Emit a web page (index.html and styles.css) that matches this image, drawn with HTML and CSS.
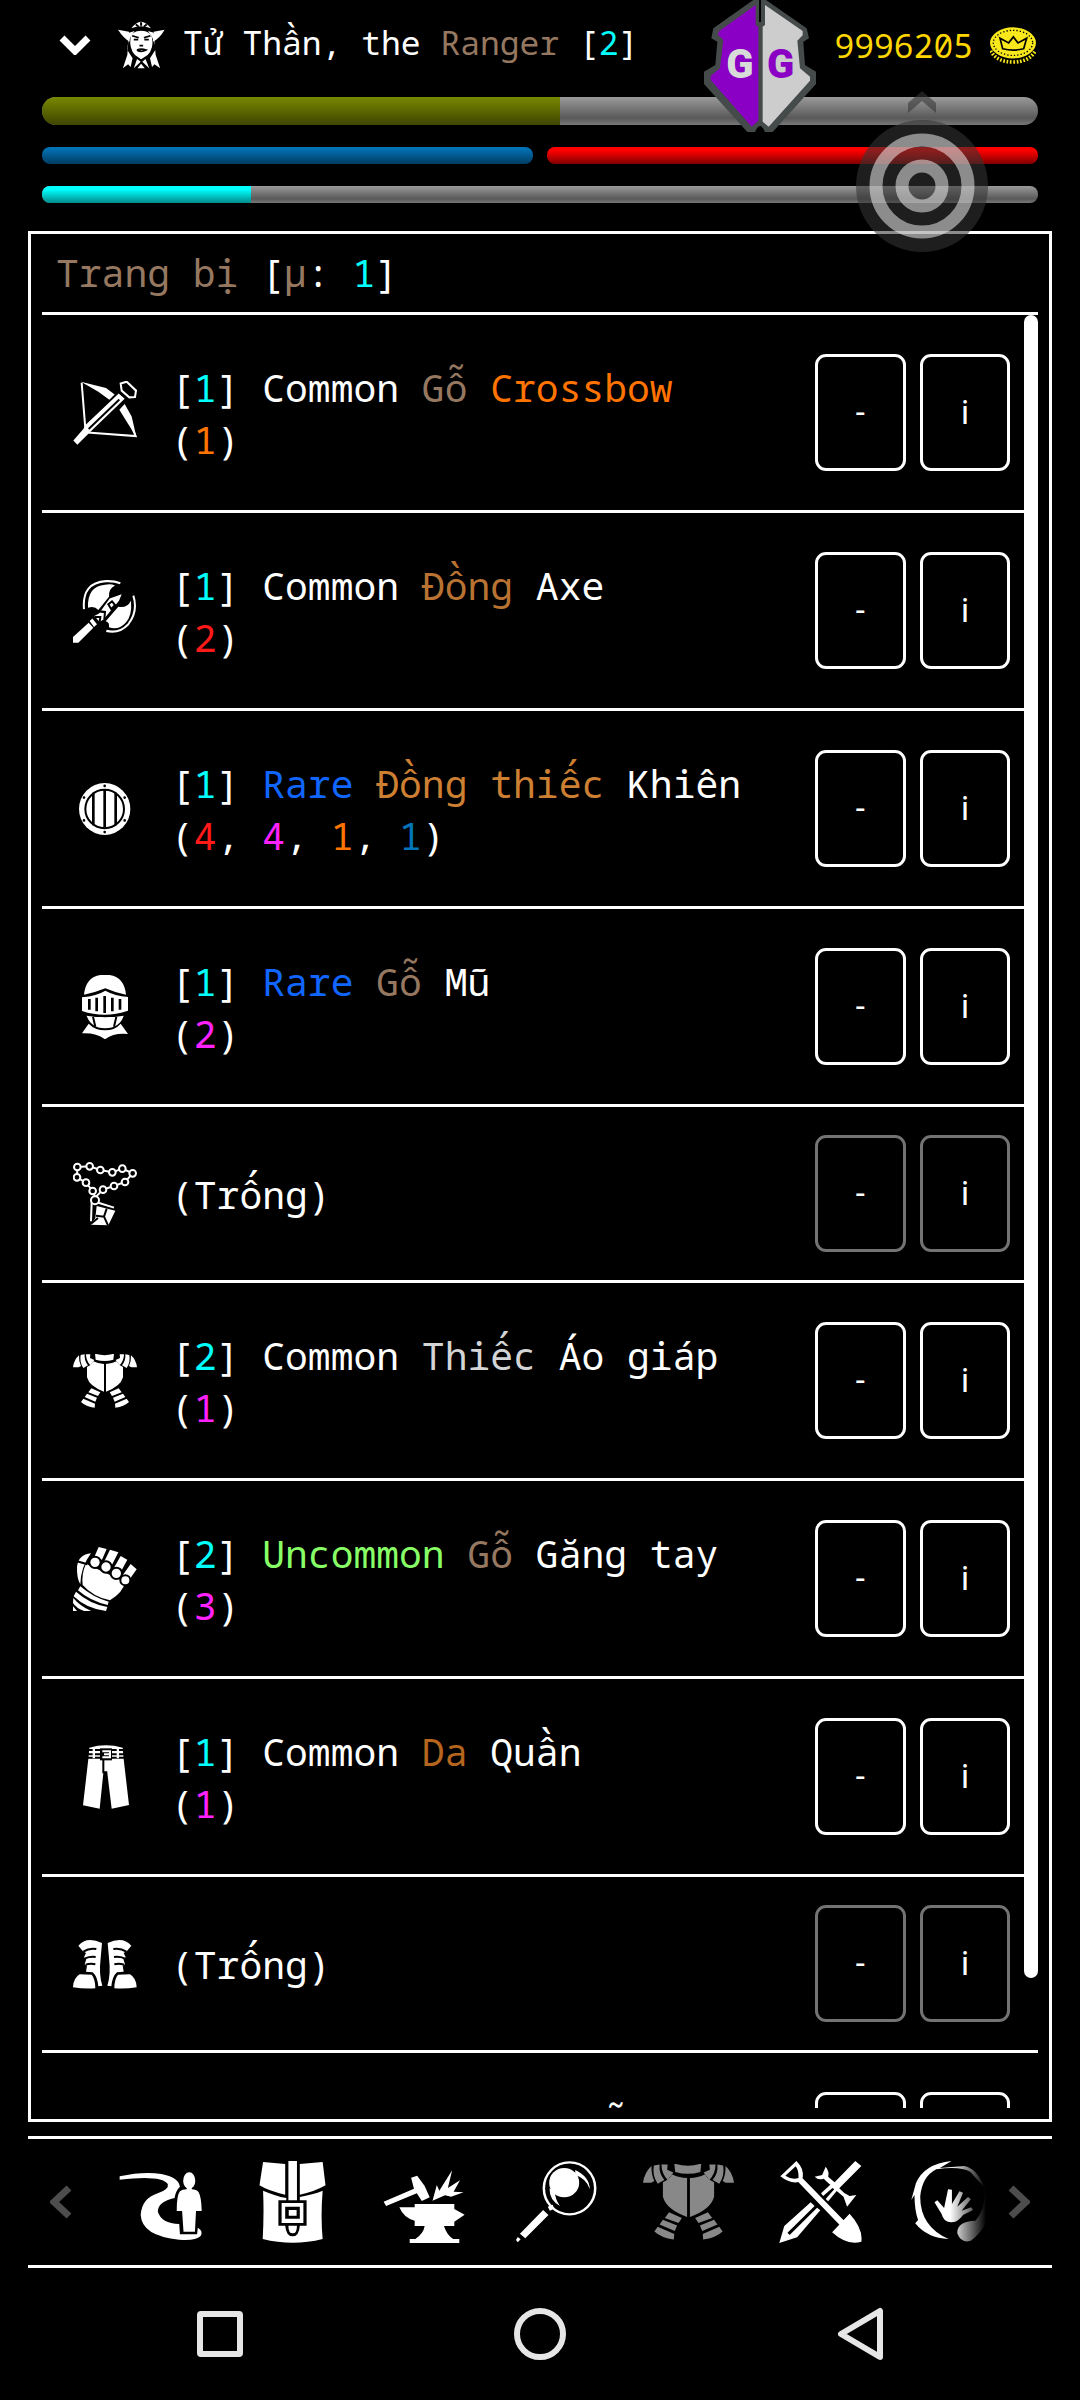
FILE: index.html
```html
<!DOCTYPE html>
<html lang="vi">
<head>
  <meta charset="utf-8">
  <title>Trang bị</title>
  <link rel="stylesheet" href="styles.css">
</head>
<body>
  <!-- shared by the list and the toolbar -->
  <svg class="defs" aria-hidden="true">
    <defs>
      <g id="armour-half">
        <path d="M129 268 Q132 245 147 232 Q146 250 153 264 L146 268Z M152 231 L164 229 Q162 247 174 262 L160 270 Q148 252 152 231Z M168 229 H181 L180 240 L193 246 L181 262 Q168 248 168 229Z"/>
        <path d="M190 250 Q206 258 222 258 V341 Q178 325 171 298 V267 Q184 262 190 250Z"/>
        <path d="M184 331 L211 343 L204 354 L175 343Z M171 347 L201 359 L196 371 L164 357Z M160 362 L195 377 L194 389 Q168 386 153 372Z"/>
      </g>
      <symbol id="armour" viewBox="129 228 192 162" preserveAspectRatio="none">
        <path d="M195 227 Q224 236 252 227 L250 245 Q224 253 197 245Z"/>
        <use href="#armour-half"/>
        <use href="#armour-half" transform="translate(450 0) scale(-1 1)"/>
      </symbol>
      <g id="boot">
        <path d="M145 858 Q170 828 216 850 L212 895 Q206 945 217 978 L205 980 Q202 950 188 938 L168 936 L171 918 L164 914 L169 898 L162 893 L168 880 L158 874Z"/>
        <path d="M149 944 L185 945 Q196 958 196 986 Q160 988 129 983 Q130 955 149 944Z"/>
        <path class="cut" d="M160 876 Q178 864 199 868 M165 896 Q180 890 197 892 M167 915 Q182 910 196 914"/>
      </g>
    </defs>
  </svg>

  <header class="top">
    <button class="hero">
      <svg class="chevron" viewBox="0 0 32 20"><path class="line" d="M3 3 L16 16 L29 3"/></svg>
      <svg class="portrait" viewBox="289 68 116 144" preserveAspectRatio="none">
        <path d="M289 94 L316 100 L318 130 Q303 120 289 94Z M404 94 L377 100 L375 130 Q392 120 404 94Z"/>
        <path d="M322 90 Q346 50 370 90 Q346 78 322 90Z M316 103 L330 98 Q312 125 312 155 L325 180 L320 206 L314 198 L301 210 L312 170Z M377 103 L363 98 Q381 125 381 155 L368 180 L373 206 L379 198 L393 210 L382 170Z"/>
        <path d="M320 118 Q322 98 346 97 Q370 98 373 118 Q378 150 362 170 L346 183 L331 170 Q316 150 320 118Z M336 182 L345 190 L328 210Z M357 182 L349 190 L366 210Z M346 196 L355 210 H337Z"/>
        <path class="features" d="M324 112 L340 118 M369 112 L353 118 M328 124 H339 M365 124 H354 M336 155 Q346 150 358 155 Q346 163 336 155 M342 142 H351 M346 72 V82 M333 78 L340 85 M360 78 L353 85"/>
      </svg>
      <span class="name">Tử Thần, the <span class="wood">Ranger</span> [<span class="cyan">2</span>]</span>
    </button>
    <div class="gold">
      <span>9996205</span>
      <svg class="coin" viewBox="1050 86 138 112" preserveAspectRatio="none">
        <ellipse cx="1119" cy="134" rx="69" ry="47"/>
        <path class="edge" d="M1052 158 Q1070 192 1119 192 Q1168 192 1186 158"/>
        <ellipse class="dots" cx="1119" cy="134" rx="59" ry="38"/>
        <path class="crown" d="M1088 152 L1080 120 L1106 134 L1120 116 L1134 134 L1160 120 L1151 152 Q1120 160 1088 152Z"/>
      </svg>
    </div>
  </header>

  <section class="bars">
    <div class="bar tall"><div class="fill olive" style="width:52%"></div></div>
    <div class="pair">
      <div class="bar"><div class="fill blue-fill" style="width:100%"></div></div>
      <div class="bar"><div class="fill red-fill" style="width:100%"></div></div>
    </div>
    <div class="bar"><div class="fill cyan-fill" style="width:21%"></div></div>
  </section>

  <main class="panel">
    <h1><span class="wood">Trang bị</span> [<span class="wood">μ</span>: <span class="cyan">1</span>]</h1>
    <div class="scroll">
      <ul>
        <li>
          <svg class="icon" viewBox="129 168 192 180" preserveAspectRatio="none">
            <path class="thin" d="M155 173 L166 302 M172 313 L317 323 L300 285 M272 175 L290 170 L318 195 L315 213 L298 214 L275 195Z"/>
            <path d="M153 170 L195 180 L228 188 L254 206 L238 221 L205 198Z M268 249 L284 233 L305 268 L319 325 L294 288Z M130 335 L160 303 L168 290 L266 203 L284 218 L182 310 L142 347Z"/>
            <path class="cut" d="M176 303 L268 220"/>
          </svg>
          <p>[<span class="cyan">1</span>] Common <span class="wood">Gỗ</span> <span class="orange">Crossbow</span><br>(<span class="orange">1</span>)</p>
          <button>-</button><button>i</button>
        </li>
        <li>
          <svg class="icon" viewBox="126 725 192 180" preserveAspectRatio="none">
            <path class="thin" d="M159 810 Q152 735 225 731 Q250 730 268 737 M307 772 Q322 815 292 852 Q264 880 226 871"/>
            <path d="M171 806 Q168 745 222 741 Q240 738 252 743 Q232 752 234 775 L202 812 Q190 800 171 806Z M300 786 Q304 828 284 848 Q262 870 234 861 Q236 846 224 844 L262 803 Q288 808 300 786Z"/>
            <path d="M126 888 L173 848 L187 862 L142 904 H126Z M176 843 L184 836 L198 852 L189 860Z M190 829 L204 822 L236 780 L272 768 L264 786 L218 838 L206 846Z"/>
            <path class="cut" d="M192 832 L208 832 L206 846 M204 816 L222 818 L220 838 M232 796 L243 788 L252 798 L241 810Z"/>
          </svg>
          <p>[<span class="cyan">1</span>] Common <span class="copper">Đồng</span> Axe<br>(<span class="red">2</span>)</p>
          <button>-</button><button>i</button>
        </li>
        <li>
          <svg class="icon" viewBox="129 1278 192 180" preserveAspectRatio="none">
            <ellipse cx="224" cy="1368" rx="77" ry="73"/>
            <ellipse class="cut" cx="224" cy="1368" rx="58" ry="54"/>
            <path class="slots" d="M190 1322 V1414 M224 1314 V1420 M257 1322 V1414"/>
            <path class="rivets" d="M224 1303v0 M224 1433v0 M162 1336v0 M284 1336v0 M162 1400v0 M284 1400v0"/>
          </svg>
          <p>[<span class="cyan">1</span>] <span class="rare">Rare</span> <span class="bronze">Đồng thiếc</span> Khiên<br>(<span class="red">4</span>, <span class="pink">4</span>, <span class="orange">1</span>, <span class="blue">1</span>)</p>
          <button>-</button><button>i</button>
        </li>
        <li>
          <svg class="icon" viewBox="129 225 192 192">
            <path d="M162 284 Q168 224 225 224 Q282 224 288 284 Q255 278 226 265 Q195 278 162 284Z M156 292 Q200 288 226 272 Q255 288 294 291 V332 Q225 356 156 333Z M170 347 Q225 356 281 347 Q270 384 225 385 Q182 384 170 347Z M176 371 Q195 391 225 391 Q255 391 272 371 L294 402 Q250 398 225 418 Q200 398 156 400Z"/>
            <path class="slots" d="M178 297 V329 M200 293 V334 M224 288 V339 M247 293 V334 M270 297 V329"/>
            <path class="cut" d="M189 350 L196 380 M259 350 L252 380"/>
          </svg>
          <p>[<span class="cyan">1</span>] <span class="rare">Rare</span> <span class="wood">Gỗ</span> Mũ<br>(<span class="pink">2</span>)</p>
          <button>-</button><button>i</button>
        </li>
        <li class="empty">
          <svg class="icon" viewBox="129 784 192 192">
            <path class="thin" d="M142 799 L179 797 L211 808 L247 815 L277 804 L308 818 L285 844 L252 856 L219 867 L196 890 L188 871 L168 846 L141 830Z M185 905 L183 962 M198 904 L252 921"/>
            <g class="beads">
              <circle cx="142" cy="799" r="10"/><circle cx="179" cy="797" r="10"/><circle cx="211" cy="808" r="10"/><circle cx="247" cy="815" r="10"/>
              <circle cx="277" cy="804" r="10"/><circle cx="308" cy="818" r="10"/><circle cx="285" cy="844" r="10"/><circle cx="252" cy="856" r="10"/>
              <circle cx="219" cy="867" r="10"/><circle cx="188" cy="871" r="10"/><circle cx="168" cy="846" r="10"/><circle cx="141" cy="830" r="10"/>
              <circle cx="195" cy="899" r="12"/>
            </g>
            <path d="M200 916 L256 930 L235 974 L182 972 L196 952Z"/>
            <path class="cut" d="M198 945 L222 948 L230 924 M222 948 L234 974 M204 952 L182 970"/>
          </svg>
          <p>(Trống)</p>
          <button disabled>-</button><button disabled>i</button>
        </li>
        <li>
          <svg class="icon wide"><use href="#armour"/></svg>
          <p>[<span class="cyan">2</span>] Common <span class="tin">Thiếc</span> Áo giáp<br>(<span class="pink">1</span>)</p>
          <button>-</button><button>i</button>
        </li>
        <li>
          <svg class="icon" viewBox="129 800 192 192">
            <path d="M183 819 Q145 822 141 860 Q140 895 151 912 Q152 860 183 819Z M168 850 L285 905 Q280 935 240 960 Q190 950 158 914 Q154 880 168 850Z"/>
            <path d="M206 800 L230 806 L216 838 L192 832Z M240 808 L265 816 L247 852 L222 845Z M272 827 L292 838 L275 870 L252 862Z M302 851 L320 867 L300 895 L278 885Z"/>
            <g class="knuckles"><circle cx="195" cy="846" r="17"/><circle cx="228" cy="860" r="17"/><circle cx="259" cy="879" r="17"/><circle cx="286" cy="900" r="15"/></g>
            <path d="M151 918 Q190 952 236 964 L233 974 Q180 962 144 930Z M138 934 Q178 970 232 980 L228 992 Q170 986 131 948Z M130 953 Q150 978 186 993 H165 Q140 985 129 968Z M129 978 L142 993 H129Z"/>
            <path class="cut" d="M141 843 L172 852"/>
          </svg>
          <p>[<span class="cyan">2</span>] <span class="uncommon">Uncommon</span> <span class="wood">Gỗ</span> Găng tay<br>(<span class="pink">3</span>)</p>
          <button>-</button><button>i</button>
        </li>
        <li>
          <svg class="icon" viewBox="129 254 192 192">
            <path d="M178 262 Q228 248 278 262 L281 296 L297 434 L245 445 L232 338 H220 L209 445 L159 435 L175 296Z"/>
            <path class="cut" d="M174 269 H282 M174 282 H212 M244 282 H282 M174 292 H212 M244 292 H282 M220 296 V336 H232"/>
            <rect x="210" y="264" width="36" height="36" class="hole"/>
            <path class="thin" d="M217 273 H240 V291 H217 M222 282 H238"/>
            <path d="M188 266h7v28h-7z M260 266h7v28h-7z"/>
          </svg>
          <p>[<span class="cyan">1</span>] Common <span class="leather">Da</span> Quần<br>(<span class="pink">1</span>)</p>
          <button>-</button><button>i</button>
        </li>
        <li class="empty">
          <svg class="icon" viewBox="129 817 192 192">
            <use href="#boot"/>
            <use href="#boot" transform="translate(449 0) scale(-1 1)"/>
          </svg>
          <p>(Trống)</p>
          <button disabled>-</button><button disabled>i</button>
        </li>
        <li>
          <svg class="icon" viewBox="0 0 64 64"><circle class="ring" cx="32" cy="38" r="20"/><path d="M20 4 H44 L32 18Z"/></svg>
          <p>[<span class="cyan">1</span>] Common <span class="tin">Titan</span> Nhẫn<br>(<span class="pink">1</span>)</p>
          <button>-</button><button>i</button>
        </li>
      </ul>
      <div class="thumb"></div>
    </div>
  </main>

  <nav class="tools">
    <button class="arrow" aria-label="Previous"><svg viewBox="0 0 22 34"><path class="line" d="M19 3 L4 17 L19 31"/></svg></button>
    <div class="strip">
      <button aria-label="Road">
        <svg viewBox="320 303 255 246" preserveAspectRatio="none">
          <path d="M333 349 Q400 333 450 342 Q498 352 502 380 Q490 392 487 414 Q440 425 440 455 Q450 490 500 492 L502 523 H550 L552 503 Q568 512 560 528 Q545 543 500 539 Q395 528 392 465 Q395 415 440 400 Q472 388 468 372 Q450 344 333 359Z"/>
          <ellipse cx="528" cy="362" rx="17" ry="25"/>
          <path d="M521 380 H535 V388 Q548 388 554 396 Q562 410 563 453 H547 L544 515 H512 L508 453 H493 Q493 405 502 394 Q508 388 521 388Z"/>
        </svg>
      </button>
      <button aria-label="Backpack">
        <svg viewBox="690 303 255 246" preserveAspectRatio="none">
          <path d="M735 306 L797 312 V404 Q750 393 725 376Z M838 312 L902 306 L910 376 Q880 395 838 404Z M806 303 H830 V421 H806Z"/>
          <path d="M735 392 Q770 408 800 414 V421 H778 V497 H797 Q800 529 818 529 Q836 529 838 497 H857 V421 H838 V411 Q880 402 902 392 Q896 470 902 537 Q818 560 734 537 Q738 460 735 392Z"/>
          <path fill-rule="evenodd" d="M787 429 H848 V489 H787Z M797 440 V476 H838 V440Z M807 450 H829 V467 H807Z M806 497 H830 Q830 520 818 520 Q806 520 806 497Z"/>
        </svg>
      </button>
      <button aria-label="Anvil">
        <svg viewBox="1060 303 255 246" preserveAspectRatio="none">
          <path d="M1073 425 L1158 386 L1150 353 L1167 347 L1188 378 L1202 412 L1180 423 L1166 400 L1080 438Z M1210 422 L1222 375 L1229 392 L1265 331 L1253 384 L1287 361 L1269 395 L1297 397 L1262 410 L1245 406Z"/>
          <path d="M1160 432 H1271 V447 L1300 464 L1271 485 V498 H1242 Q1250 525 1268 537 H1285 V549 H1146 V537 H1162 Q1185 520 1188 498 H1160 V482 Q1130 475 1117 442 H1160Z"/>
        </svg>
      </button>
      <button aria-label="Magnifier">
        <svg viewBox="-25 303 255 246" preserveAspectRatio="none">
          <ellipse class="line" cx="139" cy="385" rx="72" ry="78"/>
          <ellipse cx="124" cy="368" rx="42" ry="44"/>
          <path d="M155 330 Q195 350 196 388 Q186 355 155 345Z M83 385 Q82 420 112 438 Q98 415 98 395Z M78 440 L92 434 L96 446 L84 452Z M65 450 L80 465 L15 535 L0 521Z M-6 531 L2 538 L-6 547 L-11 540Z"/>
        </svg>
      </button>
      <button class="current" aria-label="Equipment"><svg class="wide"><use href="#armour"/></svg></button>
      <button aria-label="Crafting">
        <svg viewBox="713 303 255 246" preserveAspectRatio="none">
          <path fill-rule="evenodd" d="M728 349 L773 303 Q794 325 791 352 L780 366 Q755 372 728 349Z M742 347 L771 319 Q780 332 779 354 Q760 360 742 347Z"/>
          <path d="M776 364 L789 353 L910 486 L897 498Z M873 517 L922 461 Q960 505 955 545 Q915 558 873 517Z"/>
          <path d="M813 427 L824 438 L748 518 L754 525 L831 443 L840 451 L775 532 L725 549 L739 498Z"/>
          <path d="M938 303 L955 318 L893 385 Q905 400 922 408 L941 405 L915 440 L905 410 L886 393 L862 424 L855 417 L879 388 L874 384 L848 408 L842 400 L868 374 Q855 362 850 356 Q835 362 824 350 L845 345 L855 320 Q866 335 862 350 L880 367Z"/>
        </svg>
      </button>
      <button aria-label="Magic">
        <svg viewBox="1083 303 255 246" preserveAspectRatio="none">
          <path d="M1208 303 Q1130 312 1108 370 L1095 420 L1104 405 Q1104 450 1114 480 L1106 490 Q1140 535 1200 537 Q1120 500 1120 410 Q1125 350 1165 328 Q1230 318 1260 335 L1298 380 Q1280 325 1243 318 L1175 324Z"/>
          <path d="M1300 370 Q1308 440 1275 482 Q1222 484 1224 520 Q1235 552 1262 542 Q1340 480 1300 370Z"/>
          <path d="M1160 427 L1168 421 L1187 444 L1198 388 L1209 389 L1209 432 L1230 394 L1240 398 L1224 440 L1254 411 L1262 418 L1236 452 L1263 442 L1268 450 L1240 465 Q1225 488 1205 487 Q1185 485 1180 462Z"/>
        </svg>
      </button>
    </div>
    <button class="arrow" aria-label="Next"><svg viewBox="0 0 22 34"><path class="line" d="M3 3 L18 17 L3 31"/></svg></button>
  </nav>

  <footer class="system">
    <button aria-label="Recents"><svg viewBox="0 0 54 54"><rect x="7" y="7" width="40" height="40" rx="1"/></svg></button>
    <button aria-label="Home"><svg viewBox="0 0 54 54"><circle cx="27" cy="27" r="23"/></svg></button>
    <button aria-label="Back"><svg viewBox="0 0 54 54"><path d="M47 4 V50 L8 27Z"/></svg></button>
  </footer>

  <!-- floating bubbles above the game -->
  <svg class="guardian" viewBox="192 0 336 396">
    <path class="shell" d="M340 0 H378 L500 85 L507 115 L490 125 L495 195 L528 215 V252 L398 396 H375 Q360 360 345 396 H322 L192 252 V215 L226 195 L232 125 L214 115 L220 85Z"/>
    <path class="left" d="M347 15 V75 L355 80 V362 L335 380 L212 240 V228 L240 205 L250 120 L233 103 L238 93Z"/>
    <path class="right" d="M375 15 L488 93 V106 L472 122 L480 205 L510 230 V242 L386 380 L368 365 V80 L375 75Z"/>
    <path class="slit" d="M360 0 V66"/>
    <text class="g-left" x="300" y="234">G</text>
    <text class="g-right" x="422" y="234">G</text>
  </svg>
  <svg class="target" viewBox="0 0 144 172">
    <path class="tip" d="M58 12 L72 0 L86 12 V22 L72 10 L58 22Z"/>
    <circle class="dark" cx="72" cy="95" r="66"/>
    <circle class="light" cx="72" cy="95" r="46"/>
    <circle class="light" cx="72" cy="95" r="20"/>
  </svg>
</body>
</html>
```

FILE: styles.css
```css
* {
  box-sizing: border-box;
}
body {
  display: flex;
  flex-direction: column;
  height: 100vh;
  margin: 0;
  background: #000;
  color: #fff;
  font-family: 'Noto Sans Mono', 'DejaVu Sans Mono', monospace;
  font-size: 38px;
  line-height: 52px;
}
button {
  padding: 0;
  border: 0;
  background: none;
  color: inherit;
  font: inherit;
}
svg {
  display: block;
  flex: none;
  fill: currentColor;
}
.defs {
  position: absolute;
  width: 0;
  height: 0;
}

/* strokes used inside the icons */
.line, .thin, .cut, .slots, .beads, .ring, .features {
  fill: none;
  stroke: currentColor;
  stroke-width: 7;
}
.thin {
  stroke-width: 6;
}
.cut {
  stroke: #000;
  stroke-width: 6;
}
.features {
  stroke: #000;
  stroke-width: 5;
}
.slots {
  stroke: #000;
  stroke-width: 8;
}
.rivets {
  stroke: #000;
  stroke-width: 8;
  stroke-linecap: round;
}
.beads, .knuckles {
  fill: #000;
  stroke-width: 6;
}
.knuckles {
  fill: #fff;
  stroke: #000;
}
.hole {
  fill: #000;
}

/* text colours */
.cyan { color: #00ffff; }
.wood { color: #967860; }
.orange { color: #ff7300; }
.copper { color: #b87333; }
.bronze { color: #cd7f32; }
.tin { color: #d3d4d5; }
.leather { color: #b5651d; }
.rare { color: #1166ff; }
.uncommon { color: #88ff66; }
.red { color: #ff1a1a; }
.pink { color: #ff22ff; }
.blue { color: #0374b8; }

.top {
  display: flex;
  justify-content: space-between;
  align-items: center;
  height: 90px;
  padding: 0 44px 0 59px;
  font-size: 33px;
  line-height: 45px;
}
.hero {
  display: flex;
  align-items: center;
  white-space: nowrap;
}
.chevron {
  width: 32px;
  height: 20px;
}
.portrait {
  width: 47px;
  height: 48px;
  margin: 0 18px 0 27px;
}
.name {
  padding-bottom: 6px;
}
.gold {
  display: flex;
  align-items: center;
  gap: 17px;
  color: #ffd700;
}
.coin {
  width: 46px;
  height: 37px;
  color: #f9e81c;
}
.coin .edge {
  fill: none;
  stroke: currentColor;
  stroke-width: 11;
  stroke-dasharray: 5 5;
}
.coin .dots {
  fill: none;
  stroke: #000;
  stroke-width: 4;
  stroke-dasharray: 4 6;
}
.coin .crown {
  fill: none;
  stroke: #000;
  stroke-width: 5;
}

.bars {
  display: grid;
  gap: 22px;
  padding: 7px 42px 28px;
}
.pair {
  display: grid;
  grid-template-columns: 1fr 1fr;
  gap: 14px;
}
.bar {
  height: 17px;
  overflow: hidden;
  border-radius: 8px;
  background: linear-gradient(#9a9a9a, #595959 75%, #777);
}
.tall {
  height: 28px;
  border-radius: 14px;
}
.fill {
  height: 100%;
}
.olive { background: linear-gradient(#788800, #3f4500); }
.blue-fill { background: linear-gradient(#0378be, #003c61); }
.red-fill { background: linear-gradient(#ff0000 20%, #800000); }
.cyan-fill { background: linear-gradient(#00ffff 20%, #008a8a); }

.panel {
  display: flex;
  flex: 1;
  flex-direction: column;
  min-height: 0;
  margin: 0 28px 14px;
  padding: 0 11px 11px;
  border: 3px solid #fff;
}
h1 {
  margin: 0;
  padding: 12px 14px 14px;
  border-bottom: 3px solid #fff;
  font-size: 38px;
  font-weight: 400;
}
.scroll {
  position: relative;
  flex: 1;
  min-height: 0;
  overflow: hidden;
}
ul {
  margin: 0;
  padding: 0;
  list-style: none;
}
li {
  display: flex;
  align-items: center;
  padding: 39px 28px 39px 31px;
  border-bottom: 3px solid #fff;
}
li.empty {
  padding-top: 28px;
  padding-bottom: 28px;
}
.icon {
  width: 64px;
  height: 64px;
}
.icon.wide {
  height: 54px;
}
li p {
  flex: 1;
  margin: 0 0 0 34px;
}
li button {
  height: 117px;
  margin-left: 14px;
  padding: 0 38px;
  border: 3px solid #fff;
  border-radius: 11px;
  font-family: Roboto, sans-serif;
  font-size: 33px;
}
li button:disabled {
  border-color: #737373;
}
.thumb {
  position: absolute;
  top: 0;
  right: 0;
  bottom: 130px;
  width: 14px;
  border-radius: 7px;
  background: #fff;
}

.tools {
  display: flex;
  height: 132px;
  margin: 0 28px;
  border-top: 3px solid #fff;
  border-bottom: 3px solid #fff;
}
.arrow {
  display: flex;
  flex: none;
  justify-content: center;
  align-items: center;
  width: 66px;
  color: #4d4d4d;
}
.arrow svg {
  width: 22px;
  height: 34px;
}
.strip {
  display: flex;
  flex: 1;
  overflow: hidden;
  -webkit-mask-image: linear-gradient(to left, transparent, #000 36px);
  mask-image: linear-gradient(to left, transparent, #000 36px);
}
.strip button {
  display: flex;
  flex: none;
  justify-content: center;
  align-items: center;
  width: 132px;
}
.strip svg {
  width: 91px;
  height: 82px;
}
.strip .wide {
  height: 76px;
}
.current {
  color: #888;
}

.system {
  display: flex;
  height: 132px;
  padding: 0 60px;
}
.system button {
  display: flex;
  flex: 1;
  justify-content: center;
  align-items: center;
}
.system svg {
  width: 54px;
  height: 54px;
  fill: none;
  stroke: #e6e6e6;
  stroke-width: 6;
  stroke-linejoin: round;
}

.guardian {
  position: absolute;
  top: 0;
  right: 264px;
  width: 112px;
  height: 132px;
}
.shell { fill: #454a4a; }
.left { fill: #8a00c4; }
.right { fill: #cdcdcd; }
.slit {
  stroke: #000;
  stroke-width: 6;
}
.guardian text {
  font-family: Roboto, sans-serif;
  font-size: 120px;
  font-weight: 900;
  text-anchor: middle;
}
.g-left { fill: #d8dcd8; }
.g-right { fill: #8a00c4; }

.target {
  position: absolute;
  top: 91px;
  right: 86px;
  width: 144px;
  height: 172px;
}
.dark { fill: rgba(53, 53, 53, 0.57); }
.tip { fill: rgba(53, 53, 53, 0.57); }
.light {
  fill: none;
  stroke: rgba(255, 255, 255, 0.49);
  stroke-width: 13;
}
```
